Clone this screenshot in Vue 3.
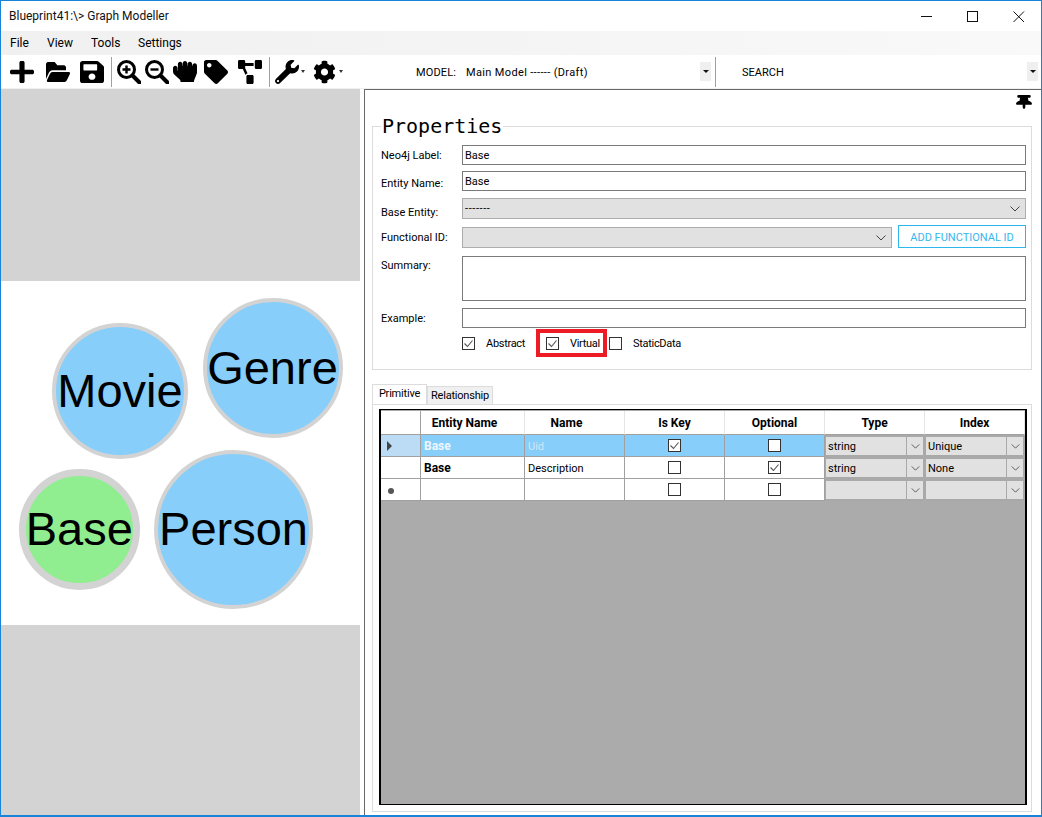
<script setup>
const menus = ['File', 'View', 'Tools', 'Settings']
const nodes = [
  { name: 'Movie', cls: 'blue', x: 51, y: 42, d: 136 },
  { name: 'Genre', cls: 'blue', x: 201.5, y: 17, d: 140 },
  { name: 'Base', cls: 'green', x: 18, y: 188, d: 120.5 },
  { name: 'Person', cls: 'blue', x: 153, y: 168.5, d: 159 },
]
const cols = [
  { key: 'entity', label: 'Entity Name', pad: true },
  { key: 'name', label: 'Name', pad: true },
  { key: 'iskey', label: 'Is Key' },
  { key: 'optional', label: 'Optional' },
  { key: 'type', label: 'Type' },
  { key: 'index', label: 'Index' },
]
const rows = [
  { mark: 'arrow', entity: 'Base', name: 'Uid', iskey: true, optional: false, type: 'string', index: 'Unique', sel: true },
  { mark: '', entity: 'Base', name: 'Description', iskey: false, optional: true, type: 'string', index: 'None', sel: false },
  { mark: 'star', entity: '', name: '', iskey: false, optional: false, type: '', index: '', sel: false },
]
</script>

<template>
  <div class="window">
    <div class="titlebar">
      <span class="title">Blueprint41:\&gt; Graph Modeller</span>
      <div class="winctl">
        <svg width="46" height="30" viewBox="0 0 46 30"><path d="M17 15.5h11" stroke="#111" fill="none"/></svg>
        <svg width="46" height="30" viewBox="0 0 46 30"><rect x="17.5" y="10.5" width="10" height="10" stroke="#111" fill="none"/></svg>
        <svg width="46" height="30" viewBox="0 0 46 30"><path d="M17.5 10.5l10.5 10.5M28 10.5L17.5 21" stroke="#111" fill="none"/></svg>
      </div>
    </div>
    <div class="menubar">
      <span v-for="m in menus" :key="m" class="menu">{{ m }}</span>
    </div>
    <div class="toolbar">
      <svg class="ic i-plus" viewBox="0 32 448 448" preserveAspectRatio="none"><path d="M416 208H272V64c0-17.67-14.33-32-32-32h-32c-17.67 0-32 14.33-32 32v144H32c-17.67 0-32 14.33-32 32v32c0 17.67 14.33 32 32 32h144v144c0 17.67 14.33 32 32 32h32c17.67 0 32-14.33 32-32V304h144c17.67 0 32-14.33 32-32v-32c0-17.67-14.33-32-32-32z"/></svg>
      <svg class="ic i-folder" viewBox="0 64 576 384" preserveAspectRatio="none"><path d="M572.694 292.093L500.27 416.248A63.997 63.997 0 0 1 444.989 448H45.025c-18.523 0-30.064-20.093-20.731-36.093l72.424-124.155A64 64 0 0 1 152 256h399.964c18.523 0 30.064 20.093 20.73 36.093zM152 224h328v-48c0-26.51-21.49-48-48-48H272l-64-64H48C21.49 64 0 85.49 0 112v278.046l69.077-118.418C86.214 242.25 117.989 224 152 224z"/></svg>
      <svg class="ic i-save" viewBox="0 32 448 448" preserveAspectRatio="none"><path d="M433.941 129.941l-83.882-83.882A48 48 0 0 0 316.118 32H48C21.49 32 0 53.49 0 80v352c0 26.51 21.49 48 48 48h352c26.51 0 48-21.49 48-48V163.882a48 48 0 0 0-14.059-33.941zM224 416c-35.346 0-64-28.654-64-64 0-35.346 28.654-64 64-64s64 28.654 64 64c0 35.346-28.654 64-64 64zm96-304.52V212c0 6.627-5.373 12-12 12H76c-6.627 0-12-5.373-12-12V108c0-6.627 5.373-12 12-12h228.52c3.183 0 6.235 1.264 8.485 3.515l3.48 3.48A11.996 11.996 0 0 1 320 111.48z"/></svg>
      <span class="sep s1"></span>
      <svg class="ic i-zoomin" viewBox="0 0 24 24"><circle cx="9.5" cy="9.5" r="8" fill="none" stroke="#000" stroke-width="3"/><path d="M15.5 15.5l7 7" stroke="#000" stroke-width="4" stroke-linecap="round"/><path d="M5.5 9.5h8M9.5 5.5v8" stroke="#000" stroke-width="2.4"/></svg>
      <svg class="ic i-zoomout" viewBox="0 0 24 24"><circle cx="9.5" cy="9.5" r="8" fill="none" stroke="#000" stroke-width="3"/><path d="M15.5 15.5l7 7" stroke="#000" stroke-width="4" stroke-linecap="round"/><path d="M5.5 9.5h8" stroke="#000" stroke-width="2.4"/></svg>
      <svg class="ic i-hand" viewBox="0 32 512 432" preserveAspectRatio="none"><path d="M464.8 80c-26.9-.4-48.8 21.2-48.8 48h-8V96.8c0-26.3-20.9-48.3-47.2-48.8-26.9-.4-48.8 21.2-48.8 48v32h-8V80.8c0-26.3-20.9-48.3-47.2-48.8-26.9-.4-48.8 21.2-48.8 48v48h-8V96.8c0-26.3-20.9-48.3-47.2-48.8-26.9-.4-48.8 21.2-48.8 48v136l-8-7.1v-48.1c0-26.3-20.9-48.3-47.2-48.8C21.9 127.6 0 149.2 0 176v66.4c0 27.4 11.7 53.5 32.2 71.8l111.7 99.3c10.2 9.1 16.1 22.2 16.1 35.9v6.7c0 13.3 10.7 24 24 24h240c13.3 0 24-10.7 24-24v-2.9c0-12.8 2.6-25.5 7.5-37.3l49-116.3c5-11.8 7.5-24.5 7.5-37.3V128.8c0-26.3-20.9-48.4-47.2-48.8z"/></svg>
      <svg class="ic i-tag" viewBox="0 0 512 512"><path d="M0 252.118V48C0 21.49 21.49 0 48 0h204.118a48 48 0 0 1 33.941 14.059l211.882 211.882c18.745 18.745 18.745 49.137 0 67.882L293.823 497.941c-18.745 18.745-49.137 18.745-67.882 0L14.059 286.059A48 48 0 0 1 0 252.118zM112 64c-26.51 0-48 21.49-48 48s21.49 48 48 48 48-21.49 48-48-21.49-48-48-48z"/></svg>
      <svg class="ic i-diagram" viewBox="0 0 640 512" preserveAspectRatio="none"><path d="M384 320H256c-17.67 0-32 14.33-32 32v128c0 17.67 14.33 32 32 32h128c17.67 0 32-14.33 32-32V352c0-17.67-14.33-32-32-32zM192 32c0-17.67-14.33-32-32-32H32C14.33 0 0 14.33 0 32v128c0 17.67 14.33 32 32 32h95.72l73.16 128.04C211.98 300.98 232.4 288 256 288h.28L192 175.51V128h224V64H192V32zM608 0H480c-17.67 0-32 14.33-32 32v128c0 17.67 14.33 32 32 32h128c17.67 0 32-14.33 32-32V32c0-17.67-14.33-32-32-32z"/></svg>
      <span class="sep s2"></span>
      <svg class="ic i-wrench" viewBox="0 0 512 512"><path d="M507.73 109.1c-2.24-9.03-13.54-12.09-20.12-5.51l-74.36 74.36-67.88-11.31-11.31-67.88 74.36-74.36c6.62-6.62 3.43-17.9-5.66-20.16-47.38-11.74-99.55.91-136.58 37.93-39.64 39.64-50.55 97.1-34.05 147.2L18.74 402.76c-24.99 24.99-24.99 65.51 0 90.5 24.99 24.99 65.51 24.99 90.5 0l213.21-213.21c50.12 16.71 107.47 5.68 147.37-34.22 37.07-37.07 49.7-89.32 37.91-136.73zM64 472c-13.25 0-24-10.75-24-24 0-13.26 10.75-24 24-24s24 10.74 24 24c0 13.25-10.75 24-24 24z"/></svg>
      <span class="caret c1"></span>
      <svg class="ic i-cog" viewBox="0 0 512 512"><path d="M487.4 315.7l-42.6-24.6c4.3-23.2 4.3-47 0-70.2l42.6-24.6c4.9-2.8 7.1-8.6 5.5-14-11.1-35.6-30-67.8-54.7-94.6-3.8-4.1-10-5.1-14.8-2.3L380.8 110c-17.9-15.4-38.5-27.3-60.8-35.1V25.8c0-5.6-3.9-10.5-9.4-11.7-36.7-8.2-74.3-7.8-109.2 0-5.5 1.2-9.4 6.1-9.4 11.7V75c-22.2 7.9-42.8 19.8-60.8 35.1L88.7 85.5c-4.9-2.8-11-1.9-14.8 2.3-24.7 26.7-43.6 58.9-54.7 94.6-1.7 5.4.6 11.2 5.5 14L67.3 221c-4.3 23.2-4.3 47 0 70.2l-42.6 24.6c-4.9 2.8-7.1 8.6-5.5 14 11.1 35.6 30 67.8 54.7 94.6 3.8 4.1 10 5.1 14.8 2.3l42.6-24.6c17.9 15.4 38.5 27.3 60.8 35.1v49.2c0 5.6 3.9 10.5 9.4 11.7 36.7 8.2 74.3 7.8 109.2 0 5.5-1.2 9.4-6.1 9.4-11.7v-49.2c22.2-7.9 42.8-19.8 60.8-35.1l42.6 24.6c4.9 2.8 11 1.9 14.8-2.3 24.7-26.7 43.6-58.9 54.7-94.6 1.5-5.5-.7-11.3-5.6-14.1zM256 336c-44.1 0-80-35.9-80-80s35.9-80 80-80 80 35.9 80 80-35.9 80-80 80z"/></svg>
      <span class="caret c2"></span>
      <div class="model">
        <span class="model-label">MODEL:</span>
        <span class="model-value">Main Model ------ (Draft)</span>
        <span class="dropbtn"><i class="tri"></i></span>
      </div>
      <span class="sep s3"></span>
      <div class="search">
        <span class="search-label">SEARCH</span>
        <span class="dropbtn"><i class="tri"></i></span>
      </div>
    </div>
    <div class="main">
      <div class="canvas">
        <div class="band"></div>
        <div class="stage">
          <div
            v-for="n in nodes"
            :key="n.name"
            class="node"
            :class="n.cls"
            :style="{ left: n.x + 'px', top: n.y + 'px', width: n.d + 'px', height: n.d + 'px' }"
          >{{ n.name }}</div>
        </div>
        <div class="band grow"></div>
      </div>
      <div class="panel">
        <div class="pinrow">
          <svg class="pin" viewBox="0 0 384 512" preserveAspectRatio="none"><path d="M298.028 214.267L285.793 96H328c13.255 0 24-10.745 24-24V24c0-13.255-10.745-24-24-24H56C42.745 0 32 10.745 32 24v48c0 13.255 10.745 24 24 24h42.207L85.972 214.267C37.465 236.82 0 277.261 0 328c0 13.255 10.745 24 24 24h136v104.007c0 1.242.289 2.467.845 3.578l24 48c2.941 5.882 11.364 5.893 14.311 0l24-48a8.008 8.008 0 0 0 .845-3.578V352h136c13.255 0 24-10.745 24-24-.001-51.183-37.983-91.42-85.973-113.733z"/></svg>
        </div>
        <fieldset class="props">
          <legend>Properties</legend>
          <div class="frow h20">
            <label class="lab">Neo4j Label:</label>
            <div class="field">Base</div>
          </div>
          <div class="frow h20 m6">
            <label class="lab nudge">Entity Name:</label>
            <div class="field">Base</div>
          </div>
          <div class="frow h21 m7">
            <label class="lab nudge2">Base Entity:</label>
            <div class="combo">
              <span class="dashes">-------</span>
              <svg class="chev" viewBox="0 0 10 6"><path d="M.5.5L5 5 9.5.5" fill="none" stroke="#444"/></svg>
            </div>
          </div>
          <div class="frow h21 m8">
            <label class="lab">Functional ID:</label>
            <div class="combo">
              <span></span>
              <svg class="chev" viewBox="0 0 10 6"><path d="M.5.5L5 5 9.5.5" fill="none" stroke="#444"/></svg>
            </div>
            <button class="addbtn">ADD FUNCTIONAL ID</button>
          </div>
          <div class="frow h45 m8">
            <label class="lab top">Summary:</label>
            <div class="field"></div>
          </div>
          <div class="frow h20 m7">
            <label class="lab">Example:</label>
            <div class="field"></div>
          </div>
          <div class="checks">
            <span class="cb on"><svg viewBox="0 0 11 11"><path d="M1.5 5.5l3 3 5-6" fill="none" stroke="#555" stroke-width="1.1"/></svg></span>
            <span class="cblab abs">Abstract</span>
            <div class="redbox">
              <span class="cb on"><svg viewBox="0 0 11 11"><path d="M1.5 5.5l3 3 5-6" fill="none" stroke="#555" stroke-width="1.1"/></svg></span>
              <span class="cblab virt">Virtual</span>
            </div>
            <span class="cb"></span>
            <span class="cblab stat">StaticData</span>
          </div>
        </fieldset>
        <div class="tabs">
          <span class="tab active">Primitive</span>
          <span class="tab">Relationship</span>
        </div>
        <div class="tabpanel">
          <div class="grid">
            <div class="ghead">
              <div class="hcell corner"></div>
              <div v-for="c in cols" :key="c.key" class="hcell" :class="{ pad: c.pad }">{{ c.label }}</div>
            </div>
            <div v-for="(r, i) in rows" :key="i" class="grow-row" :class="{ sel: r.sel }">
              <div class="rh">
                <i v-if="r.mark === 'arrow'" class="rh-arrow"></i>
                <i v-if="r.mark === 'star'" class="rh-star"></i>
              </div>
              <div class="cell bold">{{ r.entity }}</div>
              <div class="cell plain">{{ r.name }}</div>
              <div class="cell center">
                <span class="cb" :class="{ on: r.iskey }"><svg v-if="r.iskey" viewBox="0 0 11 11"><path d="M1.5 5.5l3 3 5-6" fill="none" stroke="#555" stroke-width="1.1"/></svg></span>
              </div>
              <div class="cell center">
                <span class="cb" :class="{ on: r.optional }"><svg v-if="r.optional" viewBox="0 0 11 11"><path d="M1.5 5.5l3 3 5-6" fill="none" stroke="#555" stroke-width="1.1"/></svg></span>
              </div>
              <div class="cell comb">
                <span class="cv">{{ r.type }}</span>
                <span class="cbtn"><svg viewBox="0 0 10 6"><path d="M.5.5L5 5 9.5.5" fill="none" stroke="#444"/></svg></span>
              </div>
              <div class="cell comb">
                <span class="cv">{{ r.index }}</span>
                <span class="cbtn"><svg viewBox="0 0 10 6"><path d="M.5.5L5 5 9.5.5" fill="none" stroke="#444"/></svg></span>
              </div>
            </div>
          </div>
        </div>
      </div>
    </div>
  </div>
</template>

<style>
html, body { margin: 0; background: #fff; }
</style>

<style scoped>
.window {
  width: 1042px; height: 817px; box-sizing: border-box;
  border: 1px solid #1883d7; border-bottom-width: 2px;
  display: flex; flex-direction: column; overflow: hidden;
  font-family: Roboto, "Open Sans", sans-serif; font-size: 11px; color: #000; background: #fff;
}
.titlebar { height: 30px; flex: none; display: flex; align-items: center; justify-content: space-between; }
.title { margin-left: 8px; font-size: 12px; color: #111; }
.winctl { display: flex; margin-right: -1px; }
.winctl svg { display: block; }
.menubar { height: 24px; flex: none; display: flex; align-items: center; padding-left: 9px; background: linear-gradient(90deg, #f0f0f0, #f9f9f9); font-size: 12px; }
.menu { width: 37px; }
.menu:nth-child(2) { width: 44px; }
.menu:nth-child(3) { width: 47px; }
.toolbar { height: 34px; flex: none; display: flex; align-items: center; border-bottom: 1px solid #f0f0f0; box-sizing: border-box; font-size: 11px; }
.ic { display: block; flex: none; fill: #000; }
.i-plus { width: 24px; height: 22px; margin-left: 9px; }
.i-folder { width: 24px; height: 20px; margin-left: 12px; }
.i-save { width: 24px; height: 22px; margin-left: 10px; }
.sep { width: 1px; height: 30px; background: #a0a0a0; flex: none; }
.s1 { margin-left: 7px; }
.i-zoomin { width: 24px; height: 24px; margin-left: 5px; }
.i-zoomout { width: 24px; height: 24px; margin-left: 4px; }
.i-hand { width: 24px; height: 21px; margin-left: 4px; }
.i-tag { width: 24px; height: 24px; margin-left: 7px; }
.i-diagram { width: 24px; height: 24px; margin-left: 10px; }
.s2 { margin-left: 7px; }
.i-wrench { width: 24px; height: 24px; margin-left: 5px; }
.caret { width: 0; height: 0; border: 2.5px solid transparent; border-top: 3px solid #333; border-bottom: 0; flex: none; }
.c1 { margin-left: 2px; }
.i-cog { width: 23px; height: 24px; margin-left: 8px; }
.c2 { margin-left: 3px; }
.model { display: flex; align-items: center; margin-left: 73px; width: 295px; height: 19px; }
.model-label { width: 50px; padding-top: 2px; letter-spacing: .15px; }
.model-value { flex: 1; letter-spacing: .35px; padding-top: 2px; }
.search-label { padding-top: 2px; }
.dropbtn { width: 11px; height: 19px; background: #efefef; display: flex; align-items: center; justify-content: center; flex: none; }
.tri { width: 0; height: 0; border: 3px solid transparent; border-top: 3px solid #111; border-bottom: 0; }
.s3 { margin-left: 4px; }
.search { display: flex; align-items: center; justify-content: space-between; margin-left: 26px; width: 296px; height: 19px; }
.main { flex: 1; display: flex; min-height: 0; }
.canvas { width: 359px; flex: none; display: flex; flex-direction: column; }
.band { height: 192px; background: #d3d3d3; flex: none; }
.band.grow { flex: 1; height: auto; }
.stage { height: 344px; flex: none; position: relative; background: #fff; }
.node {
  position: absolute; box-sizing: border-box; border-radius: 50%; border: 4px solid #d3d3d3;
  display: flex; align-items: center; justify-content: center; padding-bottom: 2px;
  font-family: "Liberation Sans", Arial, sans-serif; font-size: 47px; color: #000;
}
.blue { background: #87cefa; }
.green { background: #90ee90; border-width: 7px; }
.panel {
  margin-left: 4px; flex: 1; box-sizing: border-box; border-left: 1px solid #696969; border-top: 1px solid #696969;
  padding: 0 9px 3px 7px; display: flex; flex-direction: column; min-width: 0;
}
.pinrow { height: 24px; display: flex; justify-content: flex-end; flex: none; }
.pin { width: 16px; height: 14px; fill: #000; margin: 5px 0 0 0; display: block; }
.props {
  margin: 0; padding: 7px 5px 0 8px; border: 1px solid #dcdcdc; height: 256px; box-sizing: border-box; flex: none; min-width: 0;
}
.props legend { font-family: "DejaVu Sans Mono", monospace; font-size: 20px; line-height: 24px; padding: 0 1px; margin-left: 0; color: #000; }
.frow { display: flex; align-items: center; }
.lab { width: 81px; flex: none; }
.nudge { padding-top: 5px; }
.nudge2 { width: 81px; flex: none; padding-top: 8px; }
.top { align-self: flex-start; padding-top: 3px; }
.h20 { height: 20px; }
.h21 { height: 21px; }
.h45 { height: 45px; }
.m6 { margin-top: 6px; }
.m7 { margin-top: 7px; }
.m8 { margin-top: 8px; }
.field { flex: 1; height: 100%; box-sizing: border-box; border: 1px solid #7a7a7a; padding: 1px 2px 0; line-height: 18px; background: #fff; }
.combo { flex: 1; height: 100%; box-sizing: border-box; border: 1px solid #adadad; background: #e1e1e1; display: flex; align-items: center; justify-content: space-between; padding: 0 4px 0 2px; }
.dashes { letter-spacing: .6px; }
.chev { width: 10px; height: 6px; margin-right: 1px; }
.addbtn { width: 128px; height: 23px; margin-left: 6px; margin-top: -2px; box-sizing: border-box; background: #fff; border: 1px solid #2db7ed; color: #38b6ee; font: inherit; font-size: 11px; padding: 1px 0 0; flex: none; }
.checks { display: flex; align-items: center; height: 28px; margin-top: 1px; padding-left: 81px; }
.cb { width: 13px; height: 13px; box-sizing: border-box; border: 1px solid #333; background: #fff; flex: none; display: inline-block; }
.cb svg { display: block; width: 11px; height: 11px; }
.cblab { flex: none; letter-spacing: -.3px; }
.abs { margin-left: 11px; width: 50px; }
.redbox { box-sizing: border-box; border: 4px solid #ed1c24; width: 71px; height: 28px; display: flex; align-items: center; padding-left: 6px; flex: none; margin-right: 2px; }
.virt { margin-left: 11px; }
.stat { margin-left: 11px; }
.tabs { height: 20px; margin-top: 14px; display: flex; align-items: flex-end; flex: none; }
.tab { box-sizing: border-box; border: 1px solid #dcdcdc; border-bottom: 0; background: #f0f0f0; height: 18px; line-height: 17px; text-align: center; width: 66px; letter-spacing: -.2px; }
.tab.active { width: 55px; height: 20px; background: #fff; line-height: 18px; }
.tabpanel { flex: 1; border: 1px solid #dcdcdc; padding: 4px 4px 6px 6px; min-height: 0; display: flex; }
.grid { flex: 1; border: 2px solid #000; border-top-width: 1px; border-bottom-width: 1px; background: #ababab; box-sizing: border-box; padding-top: 1px; }
.ghead, .grow-row { display: grid; grid-template-columns: 40px 104px 100px 100px 100px 100px 100px; }
.ghead { height: 24px; background: #fff; }
.hcell { font-weight: 700; font-size: 12px; display: flex; align-items: center; justify-content: center; border-right: 1px solid #e4e4e4; box-sizing: border-box; border-bottom: 1px solid #a0a0a0; }
.hcell.pad { padding-right: 16px; }
.corner { border-right-color: #a0a0a0; }
.grow-row { height: 22px; background: #fff; }
.rh { border-right: 1px solid #a0a0a0; border-bottom: 1px solid #a0a0a0; box-sizing: border-box; display: flex; align-items: center; padding-left: 6px; }
.cell { border-right: 1px solid #a0a0a0; border-bottom: 1px solid #a0a0a0; box-sizing: border-box; display: flex; align-items: center; padding-left: 3px; min-width: 0; }
.plain { padding-top: 1px; }
.bold { font-weight: 700; font-size: 12px; }
.center { justify-content: center; padding-left: 0; }
.sel .rh { background: #bcdcf5; }
.sel .cell { background: #87cefa; color: #cfe6f5; }
.sel .cell.bold { color: #eef7fd; }
.rh-arrow { width: 0; height: 0; border: 5px solid transparent; border-left: 5px solid #444; border-right: 0; }
.rh-star { width: 6px; height: 6px; border-radius: 50%; background: #555; margin-left: 1px; margin-top: 2px; }
.comb { padding: 0; border: 2px solid #a9a9a9; border-left-width: 1px; background: #e1e1e1; color: #000; display: flex; }
.sel .cell.comb { background: #e1e1e1; color: #000; }
.cv { flex: 1; padding-left: 2px; }
.cbtn { width: 16px; height: 100%; border-left: 1px solid #a9a9a9; display: flex; align-items: center; justify-content: center; flex: none; }
.cbtn svg { width: 9px; height: 5px; display: block; }
</style>
